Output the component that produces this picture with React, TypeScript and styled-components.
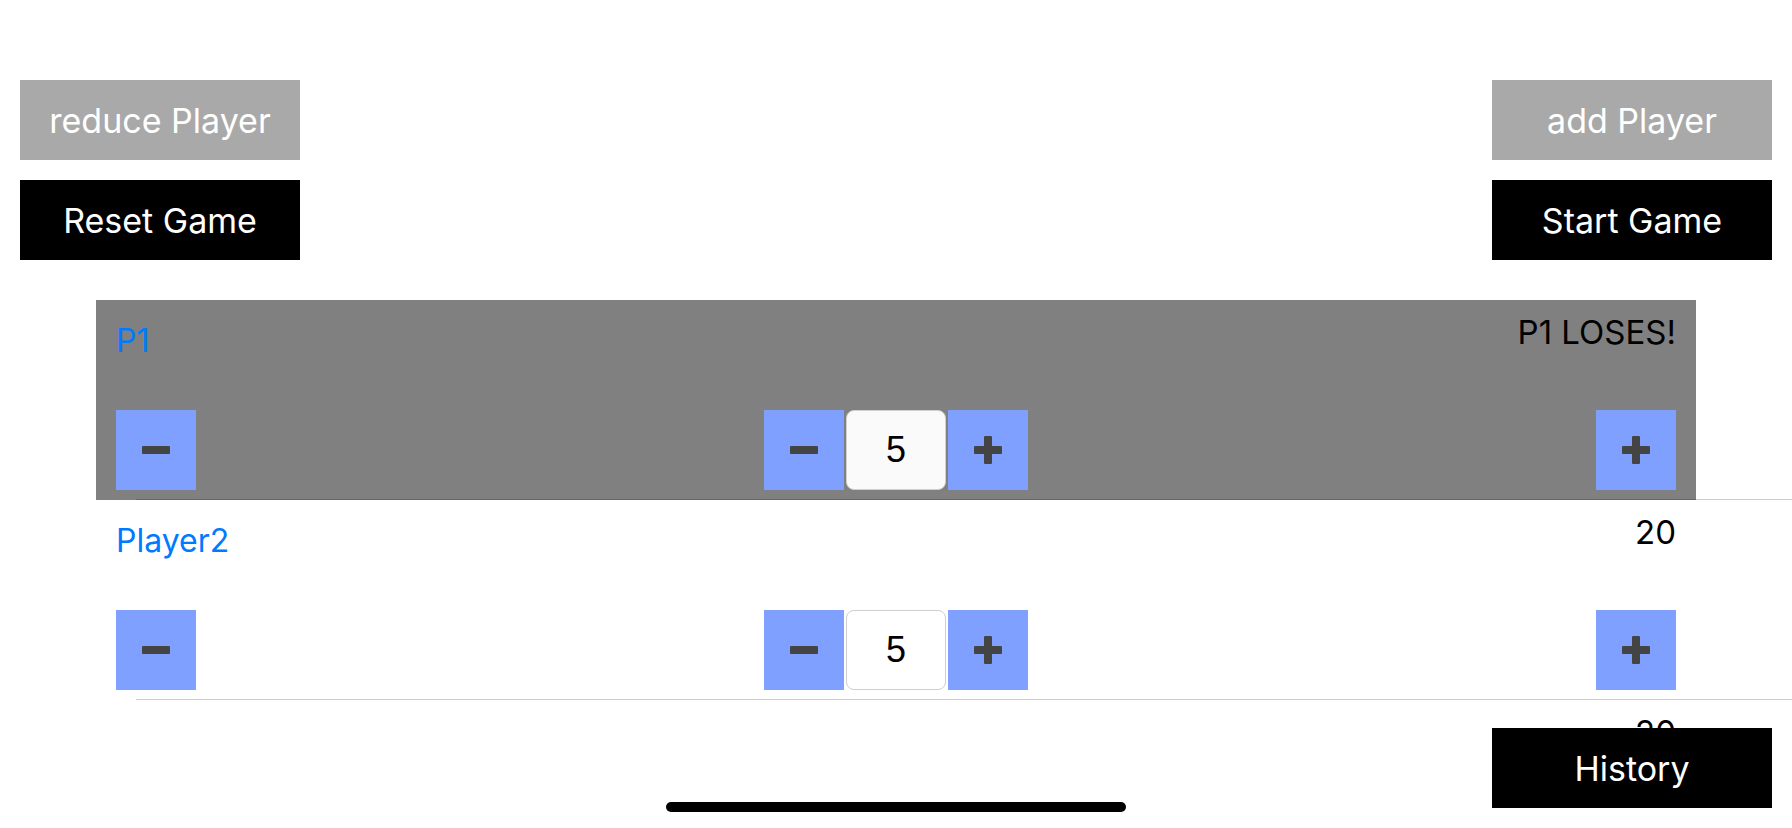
import styled, { createGlobalStyle } from "styled-components";

const GlobalStyle = createGlobalStyle`
  html, body {
    margin: 0;
    padding: 0;
    height: 100%;
    overflow: hidden;
    background: #ffffff;
    font-family: Inter, "Liberation Sans", sans-serif;
  }
`;

const Screen = styled.div`
  position: relative;
  height: 100vh;
  display: flex;
  flex-direction: column;
  background: #ffffff;
`;

const TopBar = styled.div`
  display: flex;
  justify-content: space-between;
  padding: 80px 20px 0;
`;

const ButtonColumn = styled.div`
  display: flex;
  flex-direction: column;
  gap: 20px;
`;

const ActionButton = styled.button<{ $bg: string }>`
  width: 280px;
  height: 80px;
  border: none;
  padding: 0;
  background: ${(p) => p.$bg};
  color: #ffffff;
  font-family: Inter, "Liberation Sans", sans-serif;
  font-size: 34px;
  cursor: pointer;
`;

const List = styled.div`
  flex: 1;
  min-height: 0;
  margin-top: 40px;
  overflow: hidden;
`;

const Card = styled.div<{ $dead?: boolean }>`
  box-sizing: border-box;
  height: 200px;
  margin: 0 96px;
  padding: 12px 20px 0;
  display: flex;
  flex-direction: column;
  background: ${(p) => (p.$dead ? "#808080" : "transparent")};
`;

const CardHeader = styled.div`
  height: 98px;
  display: flex;
  justify-content: space-between;
  align-items: flex-start;
`;

const Name = styled.span`
  padding-top: 9px;
  font-size: 32px;
  color: #007aff;
`;

const Status = styled.span`
  font-size: 33px;
  color: #000000;
`;

const Controls = styled.div`
  height: 80px;
  display: flex;
  justify-content: space-between;
  align-items: center;
`;

const Stepper = styled.div`
  display: flex;
  gap: 2px;
`;

const StepButton = styled.button`
  width: 80px;
  height: 80px;
  border: none;
  padding: 0;
  background: #80a0ff;
  display: flex;
  align-items: center;
  justify-content: center;
  cursor: pointer;
`;

const CountInput = styled.input<{ $dim?: boolean }>`
  box-sizing: border-box;
  width: 100px;
  height: 80px;
  border: 1px solid #cfcfcf;
  border-radius: 8px;
  background: ${(p) => (p.$dim ? "#fafafa" : "#ffffff")};
  font-family: "Liberation Sans", Arial, sans-serif;
  font-size: 36px;
  color: #000000;
  text-align: center;
  outline: none;
`;

const Separator = styled.div`
  position: relative;
  height: 1px;
  margin: -1px 0 0 136px;
  background: rgba(0, 0, 0, 0.2);
`;

const Footer = styled.div`
  display: flex;
  justify-content: flex-end;
  padding: 0 20px 20px;
`;

const HomeIndicator = styled.div`
  position: absolute;
  bottom: 16px;
  left: 50%;
  transform: translateX(-50%);
  width: 460px;
  height: 10px;
  border-radius: 5px;
  background: #000000;
`;

const MinusIcon = () => (
  <svg width="28" height="8" viewBox="0 0 28 8">
    <rect x="0" y="0" width="28" height="8" rx="1" fill="#444444" />
  </svg>
);

const PlusIcon = () => (
  <svg width="28" height="28" viewBox="0 0 28 28">
    <rect x="0" y="10" width="28" height="8" rx="1" fill="#444444" />
    <rect x="10" y="0" width="8" height="28" rx="1" fill="#444444" />
  </svg>
);

type Player = { name: string; life: number; status?: string };

const players: Player[] = [
  { name: "P1", life: 0, status: "P1 LOSES!" },
  { name: "Player2", life: 20 },
  { name: "Player3", life: 20 },
];

function PlayerRow({ player }: { player: Player }) {
  const dead = Boolean(player.status);
  return (
    <>
      <Card $dead={dead}>
        <CardHeader>
          <Name>{player.name}</Name>
          <Status>{player.status ?? player.life}</Status>
        </CardHeader>
        <Controls>
          <StepButton aria-label="minus">
            <MinusIcon />
          </StepButton>
          <Stepper>
            <StepButton aria-label="minus step">
              <MinusIcon />
            </StepButton>
            <CountInput $dim={dead} defaultValue="5" />
            <StepButton aria-label="plus step">
              <PlusIcon />
            </StepButton>
          </Stepper>
          <StepButton aria-label="plus">
            <PlusIcon />
          </StepButton>
        </Controls>
      </Card>
      <Separator />
    </>
  );
}

export default function App() {
  return (
    <>
      <GlobalStyle />
      <Screen>
        <TopBar>
          <ButtonColumn>
            <ActionButton $bg="#a9a9a9">reduce Player</ActionButton>
            <ActionButton $bg="#000000">Reset Game</ActionButton>
          </ButtonColumn>
          <ButtonColumn>
            <ActionButton $bg="#a9a9a9">add Player</ActionButton>
            <ActionButton $bg="#000000">Start Game</ActionButton>
          </ButtonColumn>
        </TopBar>
        <List>
          {players.map((p) => (
            <PlayerRow key={p.name} player={p} />
          ))}
        </List>
        <Footer>
          <ActionButton $bg="#000000">History</ActionButton>
        </Footer>
        <HomeIndicator />
      </Screen>
    </>
  );
}
